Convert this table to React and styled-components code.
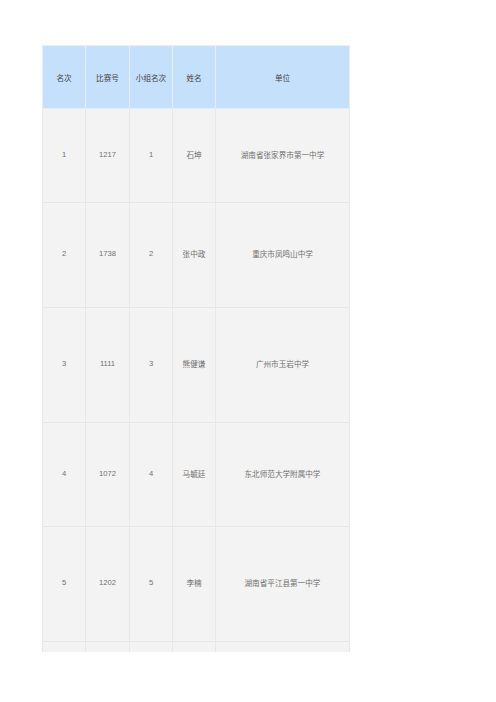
import React from "react";
import styled, { createGlobalStyle } from "styled-components";

const GlobalStyle = createGlobalStyle`
  html, body {
    margin: 0;
    padding: 0;
    background: #ffffff;
    font-family: "Liberation Sans", "Noto Sans CJK SC", sans-serif;
  }
`;

const Page = styled.div`
  width: 496px;
  height: 702px;
  padding: 45px 0 0 42px;
  box-sizing: border-box;
`;

const Clip = styled.div`
  width: 308px;
  height: 607px;
  overflow: hidden;
`;

const Table = styled.table`
  width: 307px;
  border-collapse: collapse;
  table-layout: fixed;
  font-size: 7.6px;
`;

const HeadCell = styled.th`
  height: 62px;
  padding: 0;
  background: #c4e0fb;
  color: #444444;
  font-weight: normal;
  text-align: center;
  border: 1px solid #e6edf5;
`;

const Cell = styled.td`
  height: ${(p) => p.$h}px;
  padding: 0 0 3px;
  background: #f3f3f3;
  color: #707070;
  text-align: center;
  border: 1px solid #e7e7e7;
`;

const columns = [
  { title: "名次", width: 43 },
  { title: "比赛号", width: 44 },
  { title: "小组名次", width: 43 },
  { title: "姓名", width: 43 },
  { title: "单位", width: 134 },
];

const rows = [
  { h: 90, data: ["1", "1217", "1", "石坤", "湖南省张家界市第一中学"] },
  { h: 101, data: ["2", "1738", "2", "张中政", "重庆市凤鸣山中学"] },
  { h: 111, data: ["3", "1111", "3", "熊健谦", "广州市玉岩中学"] },
  { h: 100, data: ["4", "1072", "4", "马毓廷", "东北师范大学附属中学"] },
  { h: 111, data: ["5", "1202", "5", "李楠", "湖南省平江县第一中学"] },
  { h: 60, data: ["", "", "", "", ""] },
];

export default function App() {
  return (
    <>
      <GlobalStyle />
      <Page>
        <Clip>
          <Table>
            <colgroup>
              {columns.map((c) => (
                <col key={c.title} style={{ width: c.width }} />
              ))}
            </colgroup>
            <thead>
              <tr>
                {columns.map((c) => (
                  <HeadCell key={c.title}>{c.title}</HeadCell>
                ))}
              </tr>
            </thead>
            <tbody>
              {rows.map((r, i) => (
                <tr key={i}>
                  {r.data.map((v, j) => (
                    <Cell key={j} $h={r.h}>
                      {v}
                    </Cell>
                  ))}
                </tr>
              ))}
            </tbody>
          </Table>
        </Clip>
      </Page>
    </>
  );
}
